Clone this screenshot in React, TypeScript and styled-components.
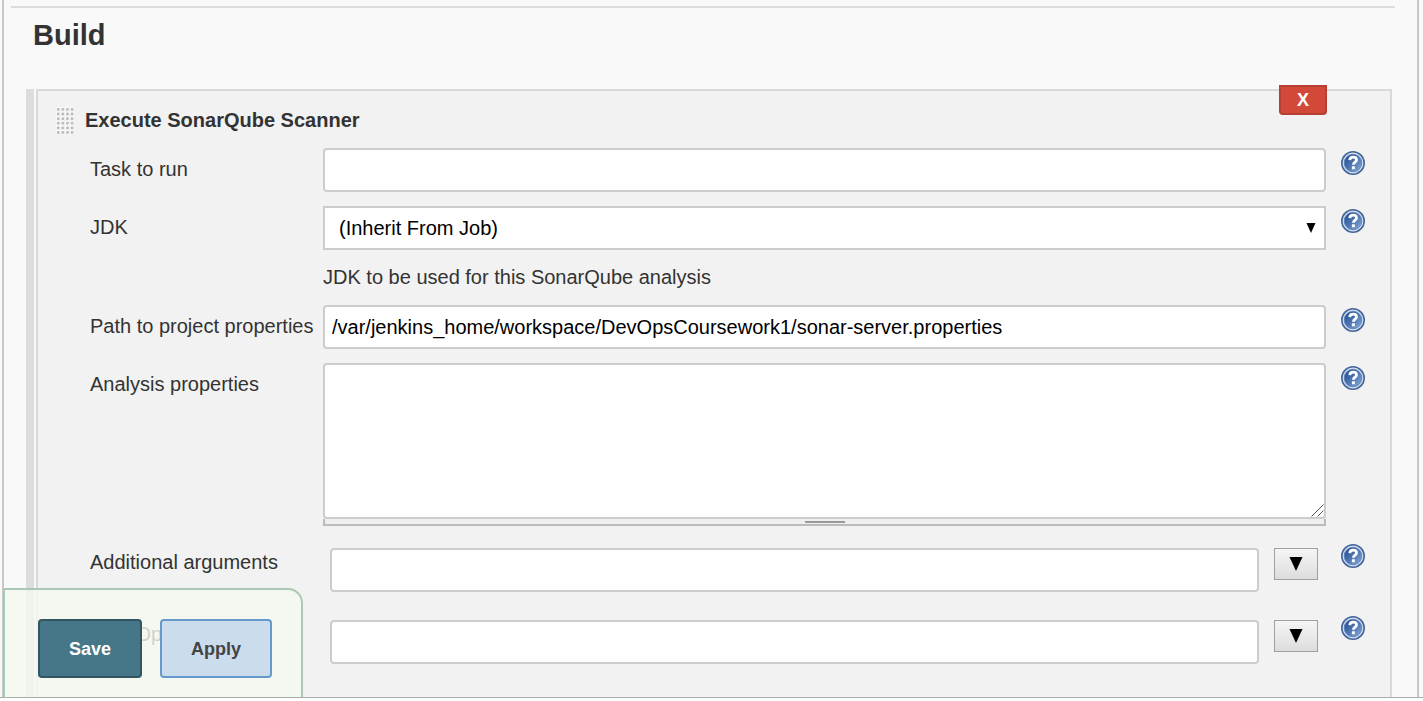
import React from "react";
import styled, { createGlobalStyle } from "styled-components";

const GlobalStyle = createGlobalStyle`
  *, *::before, *::after { box-sizing: border-box; }
  body {
    margin: 0;
    background: #fff;
    color: #333;
    font: 20px/24px "Liberation Sans", Arial, Helvetica, sans-serif;
  }
`;

const Viewport = styled.div`
  position: relative;
  display: flex;
  flex-direction: column;
  height: calc(100vh - 3px);
  overflow: hidden;
  background: #f9f9f9;
  border-bottom: 1px solid #aaaeab;
`;

const Frame = styled.main`
  flex: 1;
  display: flex;
  flex-direction: column;
  margin: 0 4px 0 2px;
  border: solid #c8c8c8;
  border-width: 0 2px;
`;

const Rule = styled.hr`
  width: auto;
  height: 2px;
  margin: 6px 22px 0 7px;
  border: 0;
  background: #ddd;
`;

const Heading = styled.h1`
  margin: 9px 0 36px 29px;
  font-size: 29px;
  line-height: 36px;
`;

const Section = styled.section`
  flex: 1;
  display: flex;
  margin: 0 25px 0 22px;
  gap: 2px;
`;

const DragBar = styled.div`
  width: 8px;
  background: #ddd;
`;

const Panel = styled.form`
  position: relative;
  flex: 1;
  min-width: 0;
  padding: 0 25px 24px 52px;
  background: #f2f2f2;
  border: 2px solid #d9d9d9;
  border-bottom: 0;
`;

const TitleRow = styled.header`
  display: flex;
  align-items: center;
  gap: 11px;
  height: 57px;
  margin-left: -34px;
`;

const Title = styled.h2`
  margin: 0;
  font-size: 20px;
  line-height: 24px;
`;

const Grip = styled.svg`
  width: 18px;
  height: 28px;
`;

const DeleteButton = styled.button`
  position: absolute;
  top: -6px;
  right: 63px;
  width: 48px;
  height: 30px;
  padding: 0;
  color: #fff;
  background: #d24939;
  border: 2px solid #b53f32;
  border-radius: 0 0 4px 4px;
  font: bold 18px/20px "Liberation Sans", Arial, sans-serif;
`;

const Rows = styled.div`
  display: flex;
  flex-direction: column;
  gap: 14px;
`;

const Row = styled.div`
  display: grid;
  grid-template-columns: 218px minmax(0, 1fr) 24px;
  column-gap: 15px;
  align-items: start;
`;

const Label = styled.label`
  padding-top: 9px;
  white-space: nowrap;
`;

const Field = styled.div<{ $nested?: boolean }>`
  position: relative;
  display: flex;
  gap: 15px;
  padding: ${(p) => (p.$nested ? "7px 8px 7px 7px" : "0")};
`;

const TextInput = styled.input`
  flex: 1;
  min-width: 0;
  height: 44px;
  padding: 0 7px;
  color: #000;
  background: #fff;
  border: 2px solid #ccc;
  border-radius: 4px;
  font: inherit;
`;

const Select = styled.select`
  flex: 1;
  min-width: 0;
  height: 44px;
  padding: 0 32px 0 14px;
  appearance: none;
  color: #000;
  background: #fff;
  border: 2px solid #ccc;
  border-radius: 0;
  font: inherit;
`;

const SelectArrow = styled.svg`
  position: absolute;
  top: 17px;
  right: 10px;
  width: 10px;
  height: 10px;
  pointer-events: none;
`;

const Description = styled.p`
  grid-column: 2;
  margin: 0;
  padding: 1px 0 2px;
`;

const AreaField = styled.div`
  position: relative;
  padding-bottom: 1px;
`;

const TextArea = styled.textarea`
  display: block;
  width: 100%;
  height: 156px;
  padding: 7px;
  color: #000;
  background: #fff;
  border: 2px solid #ccc;
  border-radius: 4px;
  font: inherit;
  resize: vertical;

  &::-webkit-resizer { background: transparent; }
`;

const ResizeHandle = styled.svg`
  position: absolute;
  right: 2px;
  bottom: 10px;
  width: 13px;
  height: 13px;
  pointer-events: none;
`;

const Grabber = styled.div`
  display: flex;
  justify-content: center;
  height: 7px;
  padding-top: 2px;
  background: #efefef;
  border: solid #bbb;
  border-width: 0 2px 2px;

  &::after {
    content: "";
    width: 40px;
    height: 2px;
    background: #999;
  }
`;

const ExpandButton = styled.button`
  width: 44px;
  height: 32px;
  padding: 0;
  background: linear-gradient(#f5f5f5, #ddd);
  border: 1px solid #a0a0a0;
  display: flex;
  align-items: center;
  justify-content: center;
`;

const HelpLink = styled.a`
  display: block;
  width: 24px;
  height: 24px;
  margin-top: 3px;

  svg { display: block; }
`;

const ActionBar = styled.div`
  position: absolute;
  left: 3px;
  bottom: 0;
  display: flex;
  gap: 18px;
  padding: 29px 29px 19px 33px;
  background: rgba(245, 249, 239, 0.8);
  border: 2px solid #aac8b4;
  border-bottom: 0;
  border-radius: 0 15px 0 0;
`;

const ActionButton = styled.button<{ $primary?: boolean }>`
  height: 59px;
  padding: 0 29px;
  color: ${(p) => (p.$primary ? "#fff" : "#444")};
  background: ${(p) => (p.$primary ? "#457788" : "#cbdded")};
  border: 2px solid ${(p) => (p.$primary ? "#315563" : "#6699cc")};
  border-radius: 4px;
  font: bold 18px/22px "Liberation Sans", Arial, sans-serif;
`;

function Help({ topic }: { topic: string }) {
  return (
    <HelpLink href="#help" aria-label={`Help for ${topic}`}>
      <svg width="24" height="24" viewBox="0 0 24 24" fill="none">
        <defs>
          <linearGradient id="helpFill" x1="0" y1="0" x2="1" y2="1">
            <stop offset="0" stopColor="#234a86" />
            <stop offset="0.5" stopColor="#4a74b2" />
            <stop offset="1" stopColor="#8db0dc" />
          </linearGradient>
        </defs>
        <circle cx="12" cy="12" r="11.2" fill="#d5e0f0" stroke="#45669b" strokeWidth="1.6" />
        <circle cx="12" cy="12" r="8.8" fill="url(#helpFill)" stroke="#5b80b8" strokeWidth="0.8" />
        <path d="M8.7 9.2C8.9 6.9 10.3 6.1 12.2 6.1c2 0 3.3 1 3.3 2.8 0 2.2-3.1 2.3-3.1 4.9" stroke="#fff" strokeWidth="2.8" />
        <rect x="10.9" y="15.3" width="3" height="3" rx="0.5" fill="#fff" />
      </svg>
    </HelpLink>
  );
}

function GripDots() {
  const dots: React.ReactNode[] = [];
  for (let y = 0; y < 6; y++) {
    for (let x = 0; x < 4; x++) {
      dots.push(
        <g key={`${x}-${y}`}>
          <rect x={x * 4.6} y={y * 4.6 + 1.2} width="3.4" height="3.4" fill="#fff" />
          <rect x={x * 4.6 + 0.8} y={y * 4.6 + 2} width="2.8" height="2.8" rx="0.8" fill="#bdbdbd" />
        </g>
      );
    }
  }
  return <Grip viewBox="0 0 18 28" aria-hidden="true">{dots}</Grip>;
}

function ExpandableRow({ id, label }: { id: string; label: string }) {
  return (
    <Row>
      <Label htmlFor={id}>{label}</Label>
      <Field $nested>
        <TextInput id={id} type="text" />
        <ExpandButton type="button" aria-label={`Expand ${label}`}>
          <svg width="14" height="14" viewBox="0 0 14 14">
            <path d="M0.5 0h13L7 14z" fill="#000" />
          </svg>
        </ExpandButton>
      </Field>
      <Help topic={label} />
    </Row>
  );
}

export default function App() {
  return (
    <>
      <GlobalStyle />
      <Viewport>
        <Frame>
          <Rule />
          <Heading>Build</Heading>
          <Section>
            <DragBar />
            <Panel>
              <DeleteButton type="button">X</DeleteButton>
              <TitleRow>
                <GripDots />
                <Title>Execute SonarQube Scanner</Title>
              </TitleRow>
              <Rows>
                <Row>
                  <Label htmlFor="task">Task to run</Label>
                  <Field><TextInput id="task" type="text" /></Field>
                  <Help topic="Task to run" />
                </Row>
                <Row>
                  <Label htmlFor="jdk">JDK</Label>
                  <Field>
                    <Select id="jdk">
                      <option>(Inherit From Job)</option>
                    </Select>
                    <SelectArrow viewBox="0 0 10 10" aria-hidden="true">
                      <path d="M0.5 0h9L5 10z" fill="#000" />
                    </SelectArrow>
                  </Field>
                  <Help topic="JDK" />
                </Row>
                <Row>
                  <Description>JDK to be used for this SonarQube analysis</Description>
                </Row>
                <Row>
                  <Label htmlFor="path">Path to project properties</Label>
                  <Field>
                    <TextInput
                      id="path"
                      type="text"
                      defaultValue="/var/jenkins_home/workspace/DevOpsCoursework1/sonar-server.properties"
                    />
                  </Field>
                  <Help topic="Path to project properties" />
                </Row>
                <Row>
                  <Label htmlFor="analysis">Analysis properties</Label>
                  <AreaField>
                    <TextArea id="analysis" />
                    <ResizeHandle viewBox="0 0 13 13" aria-hidden="true">
                      <path d="M0.5 12.5l12-12M6.5 12.5l6-6" stroke="#555" strokeWidth="1" />
                    </ResizeHandle>
                    <Grabber />
                  </AreaField>
                  <Help topic="Analysis properties" />
                </Row>
                <ExpandableRow id="arguments" label="Additional arguments" />
                <ExpandableRow id="jvm" label="JVM Options" />
              </Rows>
            </Panel>
          </Section>
        </Frame>
        <ActionBar>
          <ActionButton type="button" $primary>Save</ActionButton>
          <ActionButton type="button">Apply</ActionButton>
        </ActionBar>
      </Viewport>
    </>
  );
}
